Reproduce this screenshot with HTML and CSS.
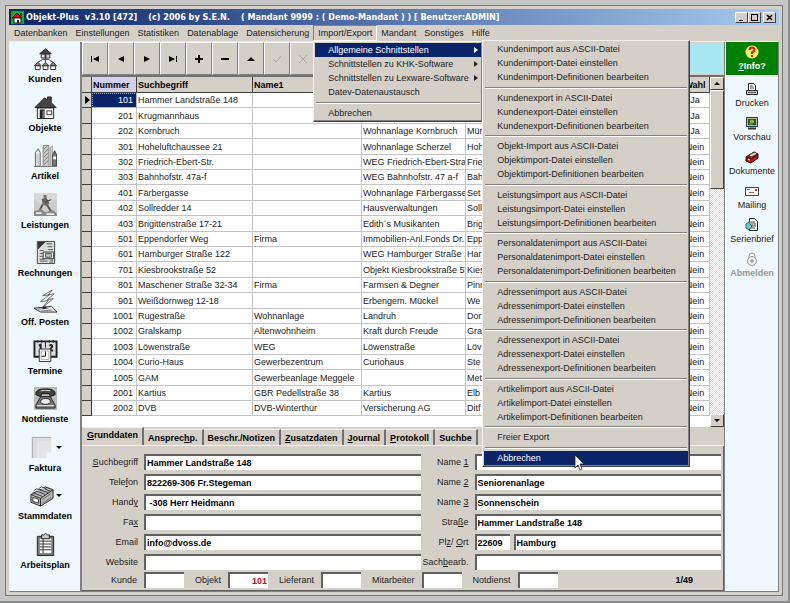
FILE: index.html
```html
<!DOCTYPE html>
<html lang="de">
<head>
<meta charset="UTF-8" />
<meta name="viewport" content="width=device-width, initial-scale=1" />
<title>Objekt-Plus v3.10</title>
<link rel="stylesheet" href="styles.css">
</head>
<body>
<div class="window">
  <header class="titlebar">
    <svg class="app-icon" viewBox="0 0 13 13" aria-hidden="true">
      <rect width="13" height="13" fill="#0b1" />
      <path d="M1 7L6 2l5 5z" fill="#e00" stroke="#400" />
      <rect x="3" y="7" width="7" height="5" fill="#fff" stroke="#222" />
      <rect x="6" y="9" width="2" height="3" fill="#222" />
      <path d="M9 2h2v3H9z" fill="#800" />
    </svg>
    <h1><span>Objekt-Plus</span><span>v3.10 [472]</span><span class="wide">(c) 2006 by S.E.N.</span><span class="wide">( Mandant 9999 : ( Demo-Mandant ) ) [ Benutzer:ADMIN]</span></h1>
    <div class="window-buttons">
      <button type="button" aria-label="Minimieren"><svg viewBox="0 0 9 9"><path d="M2 7.500h4" /></svg></button>
      <button type="button" aria-label="Maximieren"><svg viewBox="0 0 9 9"><path d="M1 1.500h7M1.500 1v7M7.500 1v7M1 7.500h7" /></svg></button>
      <button type="button" aria-label="Schließen"><svg viewBox="0 0 9 9"><path d="M2 2l5 5M7 2l-5 5" stroke-width="1.600" /></svg></button>
    </div>
  </header>

  <nav class="menubar" aria-label="Hauptmenü">
    <button type="button">Datenbanken</button>
    <button type="button">Einstellungen</button>
    <button type="button">Statistiken</button>
    <button type="button">Datenablage</button>
    <button type="button">Datensicherung</button>
    <div class="menu-root">
      <button type="button" class="open">Import/Export</button>
      <div class="menu dropdown">
        <button type="button" class="active">Allgemeine Schnittstellen<i class="arrow"></i></button>
        <button type="button">Schnittstellen zu KHK-Software<i class="arrow"></i></button>
        <button type="button">Schnittstellen zu Lexware-Software<i class="arrow"></i></button>
        <button type="button">Datev-Datenaustausch</button>
        <hr>
        <button type="button">Abbrechen</button>

        <div class="menu submenu">
          <button type="button">Kundenimport aus ASCII-Datei</button>
          <button type="button">Kundenimport-Datei einstellen</button>
          <button type="button">Kundenimport-Definitionen bearbeiten</button>
          <hr>
          <button type="button">Kundenexport in ASCII-Datei</button>
          <button type="button">Kundenexport-Datei einstellen</button>
          <button type="button">Kundenexport-Definitionen bearbeiten</button>
          <hr>
          <button type="button">Objekt-Import aus ASCII-Datei</button>
          <button type="button">Objektimport-Datei einstellen</button>
          <button type="button">Objektimport-Definitionen bearbeiten</button>
          <hr>
          <button type="button">Leistungsimport aus ASCII-Datei</button>
          <button type="button">Leistungsimport-Datei einstellen</button>
          <button type="button">Leistungsimport-Definitionen bearbeiten</button>
          <hr>
          <button type="button">Personaldatenimport aus ASCII-Datei</button>
          <button type="button">Personaldatenimport-Datei einstellen</button>
          <button type="button">Personaldatenimport-Definitionen bearbeiten</button>
          <hr>
          <button type="button">Adressenimport aus ASCII-Datei</button>
          <button type="button">Adressenimport-Datei einstellen</button>
          <button type="button">Adressenimport-Definitionen bearbeiten</button>
          <hr>
          <button type="button">Adressenexport in ASCII-Datei</button>
          <button type="button">Adressenexport-Datei einstellen</button>
          <button type="button">Adressenexport-Definitionen bearbeiten</button>
          <hr>
          <button type="button">Artikelimport aus ASCII-Datei</button>
          <button type="button">Artikelimport-Datei einstellen</button>
          <button type="button">Artikelimport-Definitionen bearbeiten</button>
          <hr>
          <button type="button">Freier Export</button>
          <hr>
          <button type="button" class="active">Abbrechen</button>
          <svg class="pointer" viewBox="0 0 11 18" aria-hidden="true"><path d="M1 1v13l3-3 2 5 2-1-2-5h4z" fill="#fff" stroke="#222" stroke-width=".8" /></svg>
        </div>
      </div>
    </div>
    <button type="button">Mandant</button>
    <button type="button">Sonstiges</button>
    <button type="button">Hilfe</button>
  </nav>

  <div class="workspace">
    <aside class="modules">
      <button type="button">
        <svg viewBox="0 0 26 26"><path d="M7 8l6-5 6 5z" fill="#444" stroke="#222" /><path d="M8.500 8.500h9v4h-9z" fill="#ddd" stroke="#333" /><path d="M12 9h2v4h-2z" fill="#333" /><path d="M13 13v4M5 17l5-3h6l5 3" fill="none" stroke="#444" /><g fill="#fff" stroke="#333"><path d="M2.500 20.500h5v4h-5zM10.500 20.500h5v4h-5zM18.500 20.500h5v4h-5z" /><path d="M1.500 20.500L5 17l3.500 3.500zM9.500 20.500L13 17l3.500 3.500zM17.500 20.500L21 17l3.500 3.500z" fill="#888" /></g></svg>
        Kunden
      </button>
      <button type="button">
        <svg viewBox="0 0 26 26"><path d="M2 13L12 3l3 2V2h4v6l5 5z" fill="#444" stroke="#222" /><path d="M4.500 13.500h17v11h-17z" fill="#f4f4f4" stroke="#222" /><path d="M7 15h5v10H7z" fill="#222" /><path d="M10 16h1v8h-1z" fill="#aaa" /><path d="M14.500 16.500h5v4h-5z" fill="#fff" stroke="#333" /></svg>
        Objekte
      </button>
      <button type="button">
        <svg viewBox="0 0 26 26"><path d="M2.500 10l3-4 2 4v14h-5z" fill="#eee" stroke="#666" /><path d="M4 12v10M6 11v11" stroke="#888" stroke-dasharray="1 1" /><path d="M10.500 2.500h6v22h-6z" fill="#ccc" stroke="#888" /><path d="M11 7l4-4M11 11l5-5M11 15l5-5M11 19l5-5M11 23l5-5" stroke="#777" /><path d="M18 24V5l2-2v21" fill="#ddd" stroke="#999" /><path d="M20.500 12l2-4 2 4v12h-4z" fill="#777" stroke="#444" /><path d="M21 14h3v3h-3z" fill="#fff" /><path d="M1 24.500h24" stroke="#777" /></svg>
        Artikel
      </button>
      <button type="button">
        <svg viewBox="0 0 26 26"><path d="M1 1h24v24H1z" fill="#ccc" /><path d="M1 8l10 6 14-6v-7H1z" fill="#d8d8d8" /><path d="M11 3h3v3h-3zM9 7l5-1 3 5-2 4-5-2z" fill="#666" /><path d="M10 13l-3 6 4 2M15 14l3 5 5 3" fill="none" stroke="#555" stroke-width="2" /><path d="M1 20l7-2 5 3 7-2 5 4v2H1z" fill="#888" /><path d="M13 10l6-2" stroke="#333" /><path d="M3 22h6M14 23h8" stroke="#eee" stroke-width="2" /></svg>
        Leistungen
      </button>
      <button type="button">
        <svg viewBox="0 0 26 26"><path d="M4.500 1.500h18v23h-18z" fill="#ddd" stroke="#444" /><path d="M5 2h8L5 10z" fill="#333" /><path d="M14 4h6M15 7h5M7 11h4M16 10h5M7 14h3M7 17h3M7 20h5M7 22h8M18 21h3M17 23h4" stroke="#555" /><path d="M10.500 12.500h11v7h-11z" fill="#eee" stroke="#333" /><path d="M13 14h6v4h-6z" fill="#bbb" stroke="#555" /></svg>
        Rechnungen
      </button>
      <button type="button">
        <svg viewBox="0 0 26 26"><path d="M20 1L10 7l7-1-9 7 8-1-6 7 11-9-6 1 7-6-6 1z" fill="#fff" stroke="#444" stroke-width=".8" /><path d="M1 20l18-2 6 6H8z" fill="#eee" stroke="#333" /><path d="M5 21l11-1M8 23l12-1" stroke="#777" /><path d="M10 20l4-1" stroke="#222" stroke-width="2" /></svg>
        Off. Posten
      </button>
      <button type="button">
        <svg viewBox="0 0 26 26"><path d="M1.500 3.500h23v16h-23z" fill="#ddd" stroke="#222" stroke-width="2" /><path d="M13 3v7M5 2v3M9 2v3M17 2v3M21 2v3" stroke="#222" /><path d="M6 8l2-1v7M6 14h4M17 8q3-2 3 1l-3 4h4" fill="none" stroke="#222" stroke-width="2" /><path d="M6.500 11.500h12v13h-12z" fill="#fff" stroke="#333" /><path d="M8.500 13.500h8v9h-8z" fill="none" stroke="#aaa" /><path d="M13 14v5H9" fill="none" stroke="#111" /></svg>
        Termine
      </button>
      <button type="button">
        <svg viewBox="0 0 26 26"><path d="M1 1h24v24H1z" fill="#bbb" /><path d="M3 9q-1-6 10-6t10 6l-5 2-1-3H9l-1 3z" fill="#444" stroke="#111" /><path d="M8 5q5-1 10 0" stroke="#ddd" fill="none" /><path d="M8 11h10l5 9v3H3v-3z" fill="#777" stroke="#222" /><ellipse cx="13" cy="16" rx="5" ry="3" fill="#eee" stroke="#222" /><path d="M4 20.500h18" stroke="#eee" /></svg>
        Notdienste
      </button>
      <button type="button">
        <span class="icon-row"><svg viewBox="0 0 26 26"><path d="M3 2h20v16h-5v6H3z" fill="#ddd" /><path d="M3.500 24V2.500H23" stroke="#aaa" fill="none" /><path d="M8 6h15v12h-5v6H8z" fill="#e4e4e4" /></svg><i class="caret"></i></span>
        Faktura
      </button>
      <button type="button">
        <span class="icon-row"><svg viewBox="0 0 26 26"><path d="M2 12L17 4l8 3v9L12 24 2 20z" fill="#bbb" stroke="#222" /><path d="M2 12l10 4L25 7M12 16v8" stroke="#222" fill="none" /><path d="M4 10l10 4M7 8l10 4M10 7l10 3M14 5l9 4" stroke="#333" /><path d="M5 8l3-2 5 2M10 6l3-2 5 2" fill="#eee" stroke="#444" /><path d="M4 15l6 2v4l-6-2z" fill="#fff" stroke="#333" /><path d="M14 17l9-6M14 21l9-6" stroke="#666" /></svg><i class="caret"></i></span>
        Stammdaten
      </button>
      <button type="button">
        <svg viewBox="0 0 26 26"><path d="M4.500 4.500h17v20h-17z" fill="#777" stroke="#222" /><path d="M7 7h12v15H7z" fill="#fff" /><path d="M7 9.500h12M7 12.500h12M7 15.500h12M7 18.500h12M10.500 7v15" stroke="#333" /><path d="M9 3h2q2-3 4 0h2v4H9z" fill="#ccc" stroke="#222" /></svg>
        Arbeitsplan
      </button>
    </aside>

    <main class="content">
      <div class="toolbar">
        <button type="button" aria-label="Erster"><svg viewBox="0 0 10 10"><path d="M1 2h1v6H1zM9 2v6L3 5z" /></svg></button>
        <button type="button" aria-label="Zurück"><svg viewBox="0 0 10 10"><path d="M8 2v6L2 5z" /></svg></button>
        <button type="button" aria-label="Weiter"><svg viewBox="0 0 10 10"><path d="M2 2v6l6-3z" /></svg></button>
        <button type="button" aria-label="Letzter"><svg viewBox="0 0 10 10"><path d="M1 2v6l6-3zM8 2h1v6H8z" /></svg></button>
        <button type="button" aria-label="Einfügen"><svg viewBox="0 0 10 10"><path d="M4 1h2v3h3v2H6v3H4V6H1V4h3z" /></svg></button>
        <button type="button" aria-label="Löschen"><svg viewBox="0 0 10 10"><path d="M1 4h8v2H1z" /></svg></button>
        <button type="button" aria-label="Bearbeiten"><svg viewBox="0 0 10 10"><path d="M1 7h8L5 3z" /></svg></button>
        <button type="button" aria-label="Speichern" disabled><svg viewBox="0 0 10 10"><path d="M1 5l3 3 5-6" class="line" /></svg></button>
        <button type="button" aria-label="Verwerfen" disabled><svg viewBox="0 0 10 10"><path d="M1 1l8 8M9 1L1 9" class="line" /></svg></button>
        <div class="status-panel"></div>
      </div>

      <div class="grid">
        <div class="grid-body">
          <table>
            <colgroup><col class="c-mark"><col class="c-num"><col class="c-search"><col class="c-name1"><col class="c-name2"><col><col class="c-choice"></colgroup>
            <thead>
              <tr><th></th><th class="sorted">Nummer</th><th>Suchbegriff</th><th>Name1</th><th></th><th></th><th>Wahl</th></tr>
            </thead>
            <tbody>
              <tr class="current"><th></th><td>101</td><td>Hammer Landstraße 148</td><td></td><td></td><td></td><td>Ja</td></tr>
              <tr><th></th><td>201</td><td>Krugmannhaus</td><td></td><td></td><td></td><td>Ja</td></tr>
              <tr><th></th><td>202</td><td>Kornbruch</td><td></td><td>Wohnanlage Kornbruch</td><td>Mün</td><td>Ja</td></tr>
              <tr><th></th><td>301</td><td>Hoheluftchaussee 21</td><td></td><td>Wohnanlage Scherzel</td><td>Hoh</td><td>Nein</td></tr>
              <tr><th></th><td>302</td><td>Friedrich-Ebert-Str.</td><td></td><td>WEG Friedrich-Ebert-Stra</td><td>Frie</td><td>Nein</td></tr>
              <tr><th></th><td>303</td><td>Bahnhofstr. 47a-f</td><td></td><td>WEG Bahnhofstr. 47 a-f</td><td>Bah</td><td>Nein</td></tr>
              <tr><th></th><td>401</td><td>Färbergasse</td><td></td><td>Wohnanlage Färbergasse</td><td>Set</td><td>Nein</td></tr>
              <tr><th></th><td>402</td><td>Sollredder 14</td><td></td><td>Hausverwaltungen</td><td>Soll</td><td>Nein</td></tr>
              <tr><th></th><td>403</td><td>Brigittenstraße 17-21</td><td></td><td>Edith´s Musikanten</td><td>Brig</td><td>Nein</td></tr>
              <tr><th></th><td>501</td><td>Eppendorfer Weg</td><td>Firma</td><td>Immobilien-Anl.Fonds Dr. F</td><td>Epp</td><td>Nein</td></tr>
              <tr><th></th><td>601</td><td>Hamburger Straße 122</td><td></td><td>WEG Hamburger Straße 1</td><td>Har</td><td>Nein</td></tr>
              <tr><th></th><td>701</td><td>Kiesbrookstraße 52</td><td></td><td>Objekt Kiesbrookstraße 5</td><td>Kies</td><td>Nein</td></tr>
              <tr><th></th><td>801</td><td>Maschener Straße 32-34</td><td>Firma</td><td>Farmsen &amp; Degner</td><td>Pinr</td><td>Nein</td></tr>
              <tr><th></th><td>901</td><td>Weißdornweg 12-18</td><td></td><td>Erbengem. Mückel</td><td>We</td><td>Nein</td></tr>
              <tr><th></th><td>1001</td><td>Rugestraße</td><td>Wohnanlage</td><td>Landruh</td><td>Dor</td><td>Nein</td></tr>
              <tr><th></th><td>1002</td><td>Gralskamp</td><td>Altenwohnheim</td><td>Kraft durch Freude</td><td>Gra</td><td>Nein</td></tr>
              <tr><th></th><td>1003</td><td>Löwenstraße</td><td>WEG</td><td>Löwenstraße</td><td>Löv</td><td>Nein</td></tr>
              <tr><th></th><td>1004</td><td>Curio-Haus</td><td>Gewerbezentrum</td><td>Curiohaus</td><td>Ste</td><td>Nein</td></tr>
              <tr><th></th><td>1005</td><td>GAM</td><td>Gewerbeanlage Meggele</td><td></td><td>Met</td><td>Nein</td></tr>
              <tr><th></th><td>2001</td><td>Kartius</td><td>GBR Pedellstraße 38</td><td>Kartius</td><td>Elb</td><td>Nein</td></tr>
              <tr><th></th><td>2002</td><td>DVB</td><td>DVB-Winterthur</td><td>Versicherung AG</td><td>Ditf</td><td>Nein</td></tr>
            </tbody>
          </table>
        </div>
        <div class="scrollbar">
          <button type="button" aria-label="Nach oben"><i class="tri-up"></i></button>
          <div class="thumb"></div>
          <button type="button" class="down" aria-label="Nach unten"><i class="caret"></i></button>
        </div>
      </div>

      <div class="tabs">
        <button type="button" class="selected"><u>G</u>runddaten</button>
        <button type="button">Ansprec<u>h</u>p.</button>
        <button type="button">Beschr./Notizen</button>
        <button type="button"><u>Z</u>usatzdaten</button>
        <button type="button"><u>J</u>ournal</button>
        <button type="button"><u>P</u>rotokoll</button>
        <button type="button">Suchbe</button>
      </div>

      <form class="details">
        <div class="fields">
          <label for="such"><u>S</u>uchbegriff</label><input id="such" value="Hammer Landstraße 148">
          <label for="name1">Name <u>1</u></label><input id="name1">
          <label for="tel">Tele<u>f</u>on</label><input id="tel" value="822269-306 Fr.Stegeman">
          <label for="name2">Name <u>2</u></label><input id="name2" value="Seniorenanlage">
          <label for="handy">Hand<u>y</u></label><input id="handy" value=" -308 Herr Heidmann">
          <label for="name3">Name <u>3</u></label><input id="name3" value="Sonnenschein">
          <label for="fax">Fa<u>x</u></label><input id="fax">
          <label for="strasse">Stra<u>ß</u>e</label><input id="strasse" value="Hammer Landstraße 148">
          <label for="email">Email</label><input id="email" value="info@dvoss.de">
          <label for="plz">Pl<u>z</u>/ <u>O</u>rt</label>
          <div class="city"><input id="plz" class="zip" value="22609"><input aria-label="Ort" value="Hamburg"></div>
          <label for="web">Website</label><input id="web">
          <label for="sach">Sach<u>b</u>earb.</label><input id="sach">
        </div>
        <div class="refs">
          <label for="kunde">Kunde</label><input id="kunde">
          <label for="objekt">Objekt</label><input id="objekt" class="red" value="101">
          <label for="lieferant">Lieferant</label><input id="lieferant">
          <label for="mitarb">Mitarbeiter</label><input id="mitarb">
          <label for="notdienst">Notdienst</label><input id="notdienst">
          <output>1/49</output>
        </div>
      </form>
    </main>

    <aside class="actions">
      <button type="button" class="info">
        <svg viewBox="0 0 14 14"><circle cx="7" cy="7" r="6.500" fill="#fe6" /><path d="M4.500 5q0-2.500 2.500-2.500T9.500 5Q9.500 6.500 7 7.500V9" fill="none" stroke="#d11" stroke-width="2" /><path d="M6 10h2v2H6z" fill="#d11" /></svg>
        <span><u>?</u>Info?</span>
      </button>
      <button type="button">
        <svg viewBox="0 0 14 14"><path d="M3.500 8V1.500h5l2 2V8" fill="#fff" stroke="#222" /><path d="M5 4h3M5 6h4" stroke="#444" /><path d="M1.500 8.500h11v4h-11z" fill="#ccc" stroke="#222" /><path d="M3 10.500h8" stroke="#555" /></svg>
        Drucken
      </button>
      <button type="button">
        <svg viewBox="0 0 14 14"><path d="M1.500 1.500h11v9h-11z" fill="#bba" stroke="#333" /><path d="M3 3h8v6H3z" fill="#063" /><path d="M5 4h4v3H5z" fill="#b92" /><path d="M4 8h4" stroke="#3c6" /><path d="M3 12.500h8" stroke="#333" stroke-width="2" /></svg>
        Vorschau
      </button>
      <button type="button">
        <svg viewBox="0 0 14 14"><path d="M1 7l8-5 4 2v4l-7 5-5-2z" fill="#c11" stroke="#300" /><path d="M2 7l4 2 7-5" fill="none" stroke="#300" /><path d="M4 5l6-3 2 2-6 3z" fill="#ddd" stroke="#333" stroke-width=".8" /><path d="M3 9l2 1" stroke="#fff" /></svg>
        Dokumente
      </button>
      <button type="button">
        <svg viewBox="0 0 14 14"><path d="M.5 3.500h13v8H.5z" fill="#fff" stroke="#444" /><path d="M10 5h2v2h-2z" fill="#c22" /><path d="M2 5.500h3M4 8.500h5" stroke="#a55" /></svg>
        Mailing
      </button>
      <button type="button">
        <svg viewBox="0 0 14 14"><path d="M4.500.5h5l3 3v9h-8z" fill="#fff" stroke="#222" /><path d="M6 4h4M6 6h5M6 8h5M6 10h4" stroke="#444" /><path d="M1 6l4-3v3l2 2-3 4-3-2z" fill="#6cc" stroke="#144" stroke-width=".8" /></svg>
        Serienbrief
      </button>
      <button type="button" disabled>
        <svg viewBox="0 0 14 14"><path d="M4 6V4q0-3 3-3t3 3v2" fill="none" stroke="#999" /><circle cx="7" cy="9" r="4.500" fill="#eee" stroke="#999" /><path d="M7 7v4M5 9h4" stroke="#888" /></svg>
        Abmelden
      </button>
    </aside>
  </div>
</div>
</body>
</html>
```

FILE: styles.css
```css
* {
  box-sizing: border-box;
}

body {
  margin: 0;
  height: 100vh;
  padding: 5px;
  display: flex;
  background: #c6c6c6;
  border-right: 2px solid #8c8c8c;
  border-bottom: 2px solid #8c8c8c;
  font-family: "Liberation Sans", Arial, sans-serif;
  font-size: 9px;
  line-height: 12px;
  color: #222;
  overflow: hidden;
}

button {
  font: inherit;
  color: inherit;
  background: none;
  border: none;
  padding: 0;
  margin: 0;
}

svg {
  display: block;
}

.window {
  flex: 1;
  display: flex;
  flex-direction: column;
  min-width: 0;
  padding: 3px;
  border: 1px solid #777;
  background: #d4d0c8;
}

/* Title bar */
.titlebar {
  display: flex;
  align-items: center;
  gap: 2px;
  height: 16px;
  padding: 0 3px 0 2px;
  background: linear-gradient(90deg, #0a246a, #a6caf0);
  color: #fff;
}

.app-icon {
  width: 13px;
  height: 13px;
}

.titlebar h1 {
  flex: 1;
  display: flex;
  gap: 6px;
  margin: 0;
  font: bold 9px/14px "DejaVu Sans Condensed", "DejaVu Sans", sans-serif;
  white-space: nowrap;
}

.titlebar .wide {
  margin-left: 5px;
}

.window-buttons {
  display: flex;
}

.window-buttons button {
  width: 13px;
  height: 11px;
  display: grid;
  place-items: center;
  background: #d4d0c8;
  border: 1px solid;
  border-color: #fff #404040 #404040 #fff;
}

.window-buttons button:last-child {
  margin-left: 2px;
}

.window-buttons svg {
  width: 9px;
  height: 9px;
  stroke: #000;
  fill: none;
}

/* Menus */
.menubar {
  display: flex;
  height: 16px;
  padding-left: 1px;
}

.menubar > button,
.menu-root > button {
  height: 16px;
  padding: 0 4px;
  white-space: nowrap;
}

.menu-root {
  position: relative;
}

.menu-root > .open {
  border: 1px solid;
  border-color: #808080 #fff #fff #808080;
}

.menu {
  position: absolute;
  z-index: 5;
  display: flex;
  flex-direction: column;
  padding: 1px;
  background: #d4d0c8;
  border: 1px solid;
  border-color: #f4f2ee #404040 #404040 #f4f2ee;
  box-shadow: inset -1px -1px #808080;
}

.dropdown {
  top: 16px;
  left: 0;
  width: 170px;
}

.submenu {
  top: -2px;
  left: 168px;
  width: 208px;
}

.menu button {
  position: relative;
  height: 14px;
  padding: 0 13px;
  text-align: left;
  white-space: nowrap;
}

.menu .active {
  background: #0a246a;
  color: #fff;
}

.menu hr {
  width: 100%;
  height: 7px;
  margin: 0;
  border: 2px solid #d4d0c8;
  border-width: 3px 1px 2px;
  background: linear-gradient(#808080 1px, #fff 1px);
}

.menu hr:nth-of-type(even) {
  height: 6px;
  border-top-width: 2px;
}

.arrow {
  position: absolute;
  right: 3px;
  top: 4px;
  border: 3px solid transparent;
  border-left: 4px solid;
  border-right: none;
}

.pointer {
  position: absolute;
  left: 91px;
  bottom: -6px;
  width: 11px;
  height: 18px;
}

/* Work area */
.workspace {
  flex: 1;
  display: flex;
  min-height: 0;
  border: 1px solid #808080;
  border-color: #f0eee8 #808080 #808080 #f0eee8;
}

.modules {
  width: 72px;
  display: flex;
  flex-direction: column;
  justify-content: space-between;
  padding: 4px 0 20px;
  background: #eff8fd;
  border-right: 2px solid #808080;
  font-weight: bold;
  color: #000;
}

.modules button,
.actions button {
  display: flex;
  flex-direction: column;
  align-items: center;
  gap: 2px;
}

.modules svg {
  width: 25px;
  height: 25px;
}

.icon-row {
  display: flex;
  align-items: center;
  gap: 2px;
}

.caret,
.tri-up {
  display: block;
  border: 3px solid transparent;
  border-top-color: #000;
  border-bottom: none;
}

.tri-up {
  border-top: none;
  border-bottom: 3px solid #000;
}

.content {
  flex: 1;
  display: flex;
  flex-direction: column;
  min-width: 0;
}

.toolbar {
  display: flex;
  height: 35px;
  border-bottom: 2px solid #707070;
}

.toolbar button {
  width: 26px;
  display: grid;
  place-items: center;
  border: 1px solid;
  border-color: #fff #808080 #808080 #fff;
}

.toolbar svg {
  width: 10px;
  height: 10px;
}

.toolbar .line {
  fill: none;
  stroke: #aaa;
}

.status-panel {
  flex: 1;
  margin: 1px 0;
  background: #a8e8f0;
}

/* Data grid */
.grid {
  display: flex;
  height: 350px;
  background: #fff;
}

.grid-body {
  flex: 1;
  min-width: 0;
  overflow: hidden;
}

table {
  width: 100%;
  table-layout: fixed;
  border-spacing: 0;
}

.c-mark { width: 10px; }
.c-num { width: 45px; }
.c-search { width: 116px; }
.c-name1 { width: 109px; }
.c-name2 { width: 104px; }
.c-choice { width: 29px; }

th,
td {
  height: 15px;
  padding: 0 1px;
  overflow: hidden;
  white-space: nowrap;
  text-align: left;
  border: 0 solid #c4c4c4;
  border-width: 0 1px 1px 0;
}

th {
  background: #d4d0c8;
  border-color: #404040;
  color: #000;
}

thead th {
  height: 16px;
}

thead .sorted {
  background: #d2d0ec;
}

tbody tr:nth-child(5n+2) td,
tbody tr:nth-child(5n+4) td {
  height: 16px;
}

tbody td:nth-child(2) {
  text-align: right;
  padding-right: 3px;
}

tr > :last-child {
  text-align: center;
}

.current td:nth-child(2) {
  background: #0a246a;
  color: #fff;
  outline: 1px dotted #c8a060;
  outline-offset: -1px;
}

.current th::before {
  content: "";
  display: block;
  margin-left: 2px;
  width: 0;
  border: 4px solid transparent;
  border-left: 5px solid #000;
  border-right: none;
}

.scrollbar {
  width: 14px;
  display: flex;
  flex-direction: column;
  background: repeating-conic-gradient(#fff 0 25%, #dedbd5 0 50%) 0 0 / 2px 2px;
}

.scrollbar button,
.thumb {
  background: #d4d0c8;
  border: 1px solid;
  border-color: #fff #404040 #404040 #fff;
}

.scrollbar button {
  height: 13px;
  display: grid;
  place-items: center;
}

.scrollbar .thumb {
  height: 99px;
}

.scrollbar .down {
  margin-top: auto;
}

/* Record tabs */
.tabs {
  display: flex;
  align-items: flex-end;
  height: 19px;
  padding-left: 1px;
  overflow: hidden;
  font-weight: bold;
  color: #000;
  border-bottom: 1px solid #f4f2ee;
}

.tabs button {
  height: 16px;
  padding: 0 4px;
  white-space: nowrap;
  border-top: 1px solid #f4f2ee;
  border-right: 2px solid #707070;
}

.tabs .selected {
  height: 18px;
  padding-bottom: 3px;
}

/* Record form */
.details {
  flex: 1;
  display: flex;
  flex-direction: column;
  justify-content: space-between;
  padding: 8px 2px 2px 0;
  border-right: 1px solid #606060;
  border-bottom: 1px solid #606060;
}

.fields {
  display: grid;
  grid-template-columns: 56px minmax(0, 276fr) 42px minmax(0, 246fr);
  column-gap: 6px;
  row-gap: 4px;
  align-items: center;
}

label {
  text-align: right;
  white-space: nowrap;
}

input {
  width: 100%;
  min-width: 0;
  height: 16px;
  padding: 0 1px;
  font: bold 9px/12px "Liberation Sans", Arial, sans-serif;
  color: #000;
  background: #fff;
  border: 0 solid #606060;
  border-width: 2px 0 0 2px;
  border-radius: 0;
  outline: none;
  white-space: pre;
}

.fields label[for="sach"] {
  justify-self: end;
}

.city {
  display: flex;
  gap: 4px;
}

.city .zip {
  width: 35px;
  flex: none;
}

.refs {
  display: flex;
  align-items: center;
  gap: 7px;
}

.refs label:first-child {
  width: 55px;
}

.refs input {
  width: 40px;
  margin-right: 4px;
}

.refs .red {
  color: #e00020;
  text-align: right;
}

.refs output {
  margin: 0 28px 0 auto;
  font-weight: bold;
  color: #000;
}

/* Right action bar */
.actions {
  width: 54px;
  display: flex;
  flex-direction: column;
  gap: 7px;
  padding-left: 1px;
  background: #eff8fd;
  border-left: 1px solid #808080;
}

.actions svg {
  width: 14px;
  height: 14px;
}

.actions button {
  gap: 1px;
}

.actions button:disabled {
  color: #999;
  font-weight: bold;
}

.actions .info {
  height: 33px;
  justify-content: center;
  background: #008000;
  color: #fff;
  font-weight: bold;
}
```
